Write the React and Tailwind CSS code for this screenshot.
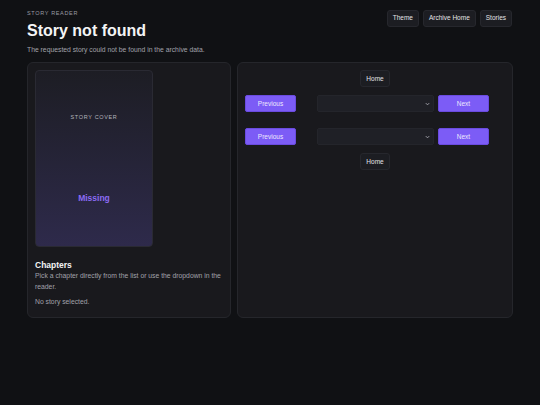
const NavButton = ({ children }) => (
  <button className="h-[17px] px-[5px] rounded-[3px] bg-[#1c1d22] border border-[#26272d] text-[6.5px] leading-none text-[#e4e4e7]">
    {children}
  </button>
);

const PurpleButton = ({ children }) => (
  <button className="w-[51px] h-[17px] shrink-0 rounded-[2px] bg-[#7c5cf6] border border-[#6a4be0] text-[6.5px] leading-none text-[#ede9fe]">
    {children}
  </button>
);

const ChapterSelect = () => (
  <div className="w-[117px] h-[17px] shrink-0 rounded-[2px] bg-[#1f2026] border border-[#24252b] flex items-center justify-end pr-[3px]">
    <svg width="5" height="4" viewBox="0 0 6 4" fill="none">
      <path d="M1 1l2 2 2-2" stroke="#a1a1aa" strokeWidth="1.2" />
    </svg>
  </div>
);

const NavRow = () => (
  <div className="flex items-center gap-[4px]">
    <PurpleButton>Previous</PurpleButton>
    <div className="ml-[17px] flex">
      <ChapterSelect />
    </div>
    <PurpleButton>Next</PurpleButton>
  </div>
);

export default function App() {
  return (
    <div
      className="w-[540px] h-[405px] bg-[#101114] text-[#e4e4e7] px-[27px] overflow-hidden"
      style={{ fontFamily: '"Liberation Sans", Arial, sans-serif' }}
    >
      <header className="flex items-start justify-between pt-[10px]">
        <div>
          <div className="text-[5.5px] tracking-[0.12em] text-[#9a9aa3] leading-none mt-[1px]">STORY READER</div>
          <h1 className="text-[16px] font-bold leading-none mt-[6px] text-[#f4f4f5]">Story not found</h1>
          <p className="text-[6.8px] text-[#a1a1aa] mt-[8px] leading-none">
            The requested story could not be found in the archive data.
          </p>
        </div>
        <div className="flex gap-[4px] mr-[1px]">
          <NavButton>Theme</NavButton>
          <NavButton>Archive Home</NavButton>
          <NavButton>Stories</NavButton>
        </div>
      </header>

      <div className="flex gap-[6px] mt-[9px]">
        <section className="w-[204px] h-[256px] rounded-[6px] bg-[#19191d] border border-[#25262b] p-[7px]">
          <div className="w-[118px] h-[177px] rounded-[4px] border border-[#2a2a33] bg-gradient-to-b from-[#1d1d24] to-[#2e2a4b] flex flex-col items-center">
            <div className="mt-[44px] text-[5.5px] tracking-[0.12em] text-[#b4b4bc] leading-none">STORY COVER</div>
            <div className="mt-[73px] text-[8.5px] font-bold text-[#8b6cf5] leading-none">Missing</div>
          </div>
          <h2 className="mt-[14px] text-[8.5px] font-bold text-[#f4f4f5] leading-none">Chapters</h2>
          <p className="mt-[0px] text-[6.8px] text-[#a1a1aa] leading-[11px]">
            Pick a chapter directly from the list or use the dropdown in the reader.
          </p>
          <p className="mt-[7px] text-[6.8px] text-[#a1a1aa] leading-none">No story selected.</p>
        </section>

        <section className="w-[276px] h-[256px] rounded-[6px] bg-[#19191d] border border-[#25262b] px-[7px] pt-[7px]">
          <div className="flex flex-col">
            <div className="w-[260px] flex justify-center">
              <NavButton>Home</NavButton>
            </div>
            <div className="mt-[8px]">
              <NavRow />
            </div>
            <div className="mt-[16px]">
              <NavRow />
            </div>
            <div className="mt-[8px] w-[260px] flex justify-center">
              <NavButton>Home</NavButton>
            </div>
          </div>
        </section>
      </div>
    </div>
  );
}
